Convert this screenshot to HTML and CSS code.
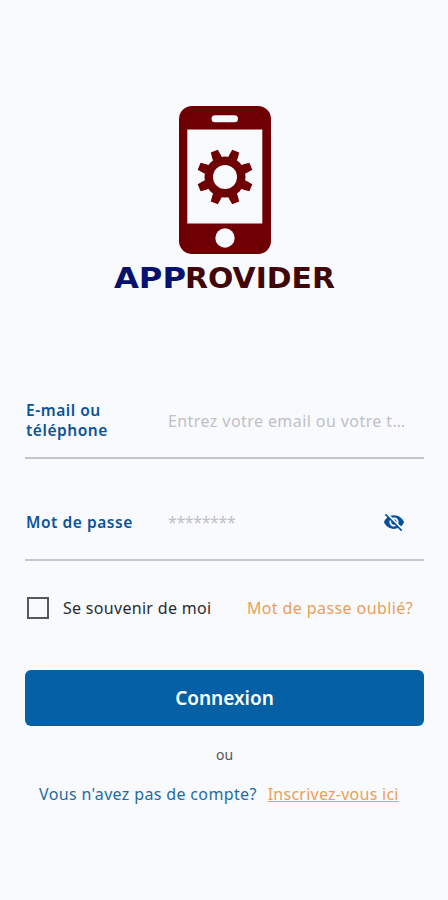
FILE: index.html
```html
<!DOCTYPE html>
<html lang="fr">
  <head>
    <meta charset="UTF-8" />
    <meta name="viewport" content="width=device-width, initial-scale=1.0" />
    <title>Approvider</title>
    <link rel="stylesheet" href="styles.css">
  </head>
  <body>
    <div class="logo">
      <svg width="240" height="190" viewBox="105 105 240 190">
        <rect x="179" y="106" width="92" height="148" rx="13" fill="#6e0003" />
        <rect x="187.3" y="129.5" width="75" height="94" fill="#f8fafe" />
        <rect x="211.5" y="115.3" width="26.5" height="7" rx="3.5" fill="#f8fafe" />
        <circle cx="225" cy="238" r="9.7" fill="#f8fafe" />
        <g transform="translate(225 177)" fill="#6e0003">
          <g id="teeth">
            <path id="tooth" d="M-4.6 -16 V-22 L-3.8 -28 H3.8 L4.6 -22 V-16 Z" transform="rotate(22.5)" />
            <use href="#tooth" transform="rotate(45)" />
            <use href="#tooth" transform="rotate(90)" />
            <use href="#tooth" transform="rotate(135)" />
          </g>
          <use href="#teeth" transform="rotate(180)" />
          <circle r="20.5" />
          <circle r="12" fill="#f8fafe" />
        </g>
        <text class="brand" x="114" y="287.6" fill="#07126e" textLength="72" lengthAdjust="spacingAndGlyphs">APP</text>
        <text class="brand" x="185" y="287.6" fill="#400608" textLength="150" lengthAdjust="spacingAndGlyphs">ROVIDER</text>
      </svg>
    </div>

    <form class="login">
      <div class="field">
        <label for="email">E-mail ou téléphone</label>
        <input type="text" id="email" class="email" placeholder="Entrez votre email ou votre téléphone" />
      </div>

      <div class="field">
        <label for="password">Mot de passe</label>
        <input type="password" id="password" class="password" placeholder="********" />
        <svg class="eye" width="22" height="22" viewBox="0 0 24 24">
          <path fill="#07519c" d="M12 7c2.76 0 5 2.24 5 5 0 .65-.13 1.26-.36 1.83l2.92 2.92c1.51-1.26 2.7-2.89 3.43-4.75-1.73-4.39-6-7.5-11-7.5-1.4 0-2.74.25-3.98.7l2.16 2.16C10.74 7.13 11.35 7 12 7zM2 4.27l2.28 2.28.46.46C3.08 8.3 1.78 10.02 1 12c1.73 4.39 6 7.5 11 7.5 1.55 0 3.03-.3 4.38-.84l.42.42L19.73 22 21 20.73 3.27 3 2 4.27zM7.53 9.8l1.55 1.55c-.05.21-.08.43-.08.65 0 1.66 1.34 3 3 3 .22 0 .44-.03.65-.08l1.55 1.55c-.67.33-1.41.53-2.2.53-2.76 0-5-2.24-5-5 0-.79.2-1.53.53-2.2zm4.31-.78l3.15 3.15.02-.16c0-1.66-1.34-3-3-3l-.17.01z" />
        </svg>
      </div>

      <div class="options">
        <label class="remember">
          <input type="checkbox" />
          <span>Se souvenir de moi</span>
        </label>
        <a class="forgot">Mot de passe oublié?</a>
      </div>

      <button type="button">Connexion</button>
    </form>

    <p class="or">ou</p>
    <p class="signup">
      <span>Vous n'avez pas de compte?</span>
      <a>Inscrivez-vous ici</a>
    </p>
  </body>
</html>
```

FILE: styles.css
```css
* {
  box-sizing: border-box;
}

body {
  margin: 0;
  padding: 105px 24px 0 25px;
  min-height: 900px;
  background-color: #f8fafe;
  font-family: "Noto Sans", "Open Sans", sans-serif;
  font-size: 16px;
}

.logo {
  height: 190px;
  margin-left: 80px;
}

.logo svg {
  display: block;
}

.brand {
  font-family: "DejaVu Sans", sans-serif;
  font-weight: bold;
  font-size: 28.5px;
}

.login {
  padding-top: 88px;
}

.field {
  display: flex;
  align-items: center;
  height: 76px;
  margin-bottom: 26px;
  border-bottom: 2px solid #c5c6ca;
}

.field label {
  width: 143px;
  padding-left: 1px;
  color: #0b539a;
  font-size: 15.5px;
  font-weight: 600;
  letter-spacing: 0.55px;
  line-height: 20px;
}

.field input {
  flex: 1;
  min-width: 0;
  padding: 2px 0 0;
  border: 0;
  outline: 0;
  background: none;
  font-family: inherit;
  font-size: 16px;
  text-overflow: ellipsis;
}

.field .email {
  margin-right: 11px;
  letter-spacing: 0.42px;
}

.field .password {
  padding: 0;
  letter-spacing: -0.4px;
}

.field input::placeholder {
  color: #c0c1c4;
  opacity: 1;
}

.eye {
  margin-right: 19px;
}

.options {
  display: flex;
  align-items: center;
  justify-content: space-between;
  height: 24px;
  margin-top: 35px;
  padding: 0 11px 0 2px;
}

.remember {
  display: flex;
  align-items: center;
  gap: 14px;
  color: #2b2b2d;
  letter-spacing: 0.3px;
}

.remember input {
  appearance: none;
  width: 22px;
  height: 22px;
  margin: 0;
  border: 2px solid #57585a;
}

.forgot,
.signup a {
  color: #eaa055;
}

.forgot {
  letter-spacing: 0.4px;
}

button {
  width: 100%;
  height: 56px;
  margin-top: 50px;
  border: 0;
  border-radius: 6px;
  background-color: #0560a6;
  color: #fff;
  font-family: inherit;
  font-size: 19px;
  font-weight: 600;
}

.or {
  margin: 19px 0 0;
  color: #555;
  font-size: 14px;
  line-height: 20px;
  text-align: center;
}

.signup {
  display: flex;
  gap: 11px;
  margin: 17px 0 0 14px;
  color: #1e6c9f;
  letter-spacing: 0.35px;
  line-height: 24px;
  white-space: nowrap;
}

.signup a {
  letter-spacing: 0.25px;
  text-decoration: underline;
}
```
